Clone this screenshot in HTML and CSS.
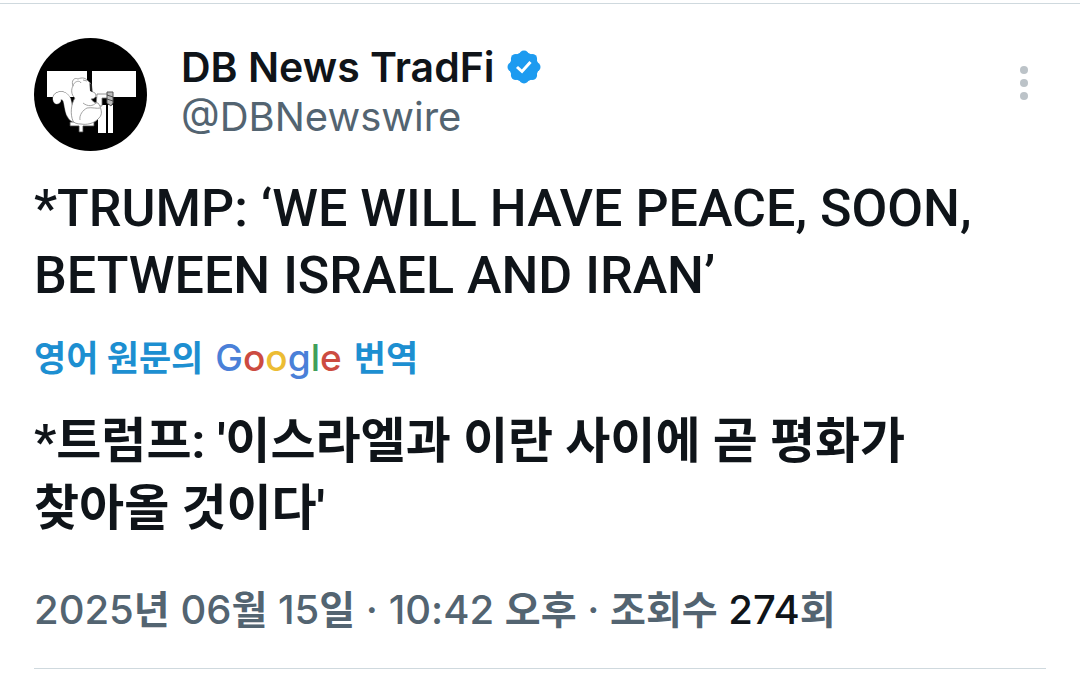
FILE: index.html
```
<!DOCTYPE html>
<html lang="ko">

<head>
    <meta charset="UTF-8">
    <meta name="viewport" content="width=device-width, initial-scale=1.0">
    <title>DB News TradFi</title>
    <link rel="stylesheet" href="styles.css">
</head>

<body>
    <article class="post">
        <header class="post-header">
            <svg class="avatar" viewBox="0 0 113 113" aria-hidden="true">
                <circle cx="56.500" cy="56.500" r="56.500" fill="#000"/>
                <path d="M13 33H53V59H13zM58 33H102V59H58z" fill="#fff"/>
                <!-- desk legs -->
                <path d="M64 67H72V95H64zM74 67H79V95H74z" fill="#fff"/>
                <!-- tail -->
                <path d="M23 62C21 57 30 55 33 62C35 69 34 77 41 81" fill="none" stroke="#666" stroke-width="8.500" stroke-linecap="round"/>
                <path d="M23 62C21 57 30 55 33 62C35 69 34 77 41 81" fill="none" stroke="#fff" stroke-width="7.500" stroke-linecap="round"/>
                <!-- stool -->
                <path d="M36 84H60V88H49V94H45V88H36z" fill="#fff" stroke="#444" stroke-width="0.800"/>
                <!-- arm -->
                <path d="M63 56H76V60H68V68H62Z" fill="#fff" stroke="#777" stroke-width="0.800"/>
                <!-- cat -->
                <path d="M39 83C36 76 37 66 41 60C37 57 37 51 39 48C37 43 40 39 44 41C48 39 52 40 54 43C57 45 58 48 57 53L61 55C63 58 61 61 57 61C59 64 61 65 64 65L66 68C67 72 69 76 65 80C60 86 52 87 47 86C43 86 40 85 39 83Z" fill="#fff" stroke="#888" stroke-width="0.800"/>
                <path d="M39 48C40 43 46 42 47 45M49 42L53 43M53 70C58 69 63 71 66 70M46 82C45 77 49 72 53 70M49 65C54 69 59 68 62 65" fill="none" stroke="#999" stroke-width="0.900"/>
                <path d="M55.500 45L58 47L58.500 54L56 53Z" fill="#222"/>
                <!-- microphone -->
                <path d="M73 54H79V65L77 68L73 65Z" fill="#bbb" stroke="#555" stroke-width="1"/>
                <path d="M73 57L79 59M73 61L79 63" stroke="#333" stroke-width="0.800"/>
            </svg>
            <div class="author">
                <div class="name-row">
                    <span class="name">DB News TradFi</span>
                    <svg class="badge" viewBox="0 0 34 34" role="img" aria-label="인증된 계정">
                        <g fill="#1d9bf0">
                            <circle cx="17" cy="17" r="14.500"/>
                            <circle cx="17" cy="5.500" r="5"/>
                            <circle cx="25.100" cy="8.900" r="5"/>
                            <circle cx="28.500" cy="17" r="5"/>
                            <circle cx="25.100" cy="25.100" r="5"/>
                            <circle cx="17" cy="28.500" r="5"/>
                            <circle cx="8.900" cy="25.100" r="5"/>
                            <circle cx="5.500" cy="17" r="5"/>
                            <circle cx="8.900" cy="8.900" r="5"/>
                        </g>
                        <path d="M10 17L15 21.500L23.500 12" fill="none" stroke="#fff" stroke-width="3"/>
                    </svg>
                </div>
                <div class="handle">@DBNewswire</div>
            </div>
            <button type="button" class="more" aria-label="더 보기">
                <svg viewBox="0 0 10 36" aria-hidden="true">
                    <circle cx="5" cy="5" r="4"/>
                    <circle cx="5" cy="18" r="4"/>
                    <circle cx="5" cy="31" r="4"/>
                </svg>
            </button>
        </header>

        <p class="text" lang="en">*TRUMP: ‘WE WILL HAVE PEACE, SOON, BETWEEN ISRAEL AND IRAN’</p>

        <a href="#" class="source">
            <span>영어 원문의</span>
            <span class="google"><span class="blue">G</span><span class="red">o</span><span class="yellow">o</span><span class="blue">g</span><span class="green">l</span><span class="red">e</span></span>
            <span>번역</span>
        </a>

        <p class="text translated">*트럼프: '이스라엘과 이란 사이에 곧 평화가 찾아올 것이다'</p>

        <footer class="meta">2025<span class="ko">년</span> 06<span class="ko">월</span> 15<span class="ko">일</span> · 10:42 <span class="ko">오후</span> · <span class="ko">조회수</span> <span class="count">274</span><span class="ko">회</span></footer>
    </article>
</body>

</html>
```
FILE: styles.css
```
body {
    margin: 0;
    background-color: #fff;
    color: #0f1419;
    font-family: Inter, "Noto Sans CJK KR", sans-serif;
}

.post {
    margin-top: 3px;
    padding: 34px 34px 0;
    border-top: 1px solid #cfd9de;
}

.post-header {
    display: flex;
    align-items: flex-start;
}

.avatar {
    width: 113px;
    height: 113px;
    flex-shrink: 0;
}

.author {
    flex: 1;
    margin-left: 34px;
    padding-top: 4px;
    line-height: 50px;
}

.name-row {
    display: flex;
    align-items: center;
    gap: 12px;
}

.name {
    font-size: 41px;
    font-weight: 600;
}

.badge {
    width: 34px;
    height: 34px;
}

.handle {
    color: #536471;
    font-size: 40px;
}

.more {
    margin: 27px 16px 0 0;
    padding: 0;
    border: none;
    background: none;
    cursor: pointer;
}

.more svg {
    display: block;
    width: 12px;
    height: 36px;
    fill: #bcc3c8;
}

.text {
    margin: 24px 0 0;
    padding-right: 34px;
    font-family: Roboto, "Noto Sans CJK KR", sans-serif;
    font-size: 52px;
    font-weight: 500;
    line-height: 67px;
    word-break: keep-all;
}

.source {
    display: flex;
    align-items: center;
    gap: 12px;
    margin-top: 22px;
    color: #1d8fd1;
    font-size: 35px;
    font-weight: 700;
    line-height: 54px;
    text-decoration: none;
}

/* Google wordmark */
.google {
    font-size: 37px;
    font-weight: 500;
}

.blue {
    color: #4a80d8;
}

.red {
    color: #cc4b41;
}

.yellow {
    color: #ecbc33;
}

.green {
    color: #3f9f5a;
}

.translated {
    margin-top: 23px;
    font-size: 49px;
    font-weight: 700;
}

.meta {
    margin-top: 38px;
    padding-bottom: 28px;
    border-bottom: 1px solid #cfd9de;
    color: #536471;
    font-size: 40px;
    font-weight: 500;
    line-height: 60px;
}

.ko {
    font-size: 39px;
    font-weight: 700;
}

.count {
    color: #0f1419;
}
```
